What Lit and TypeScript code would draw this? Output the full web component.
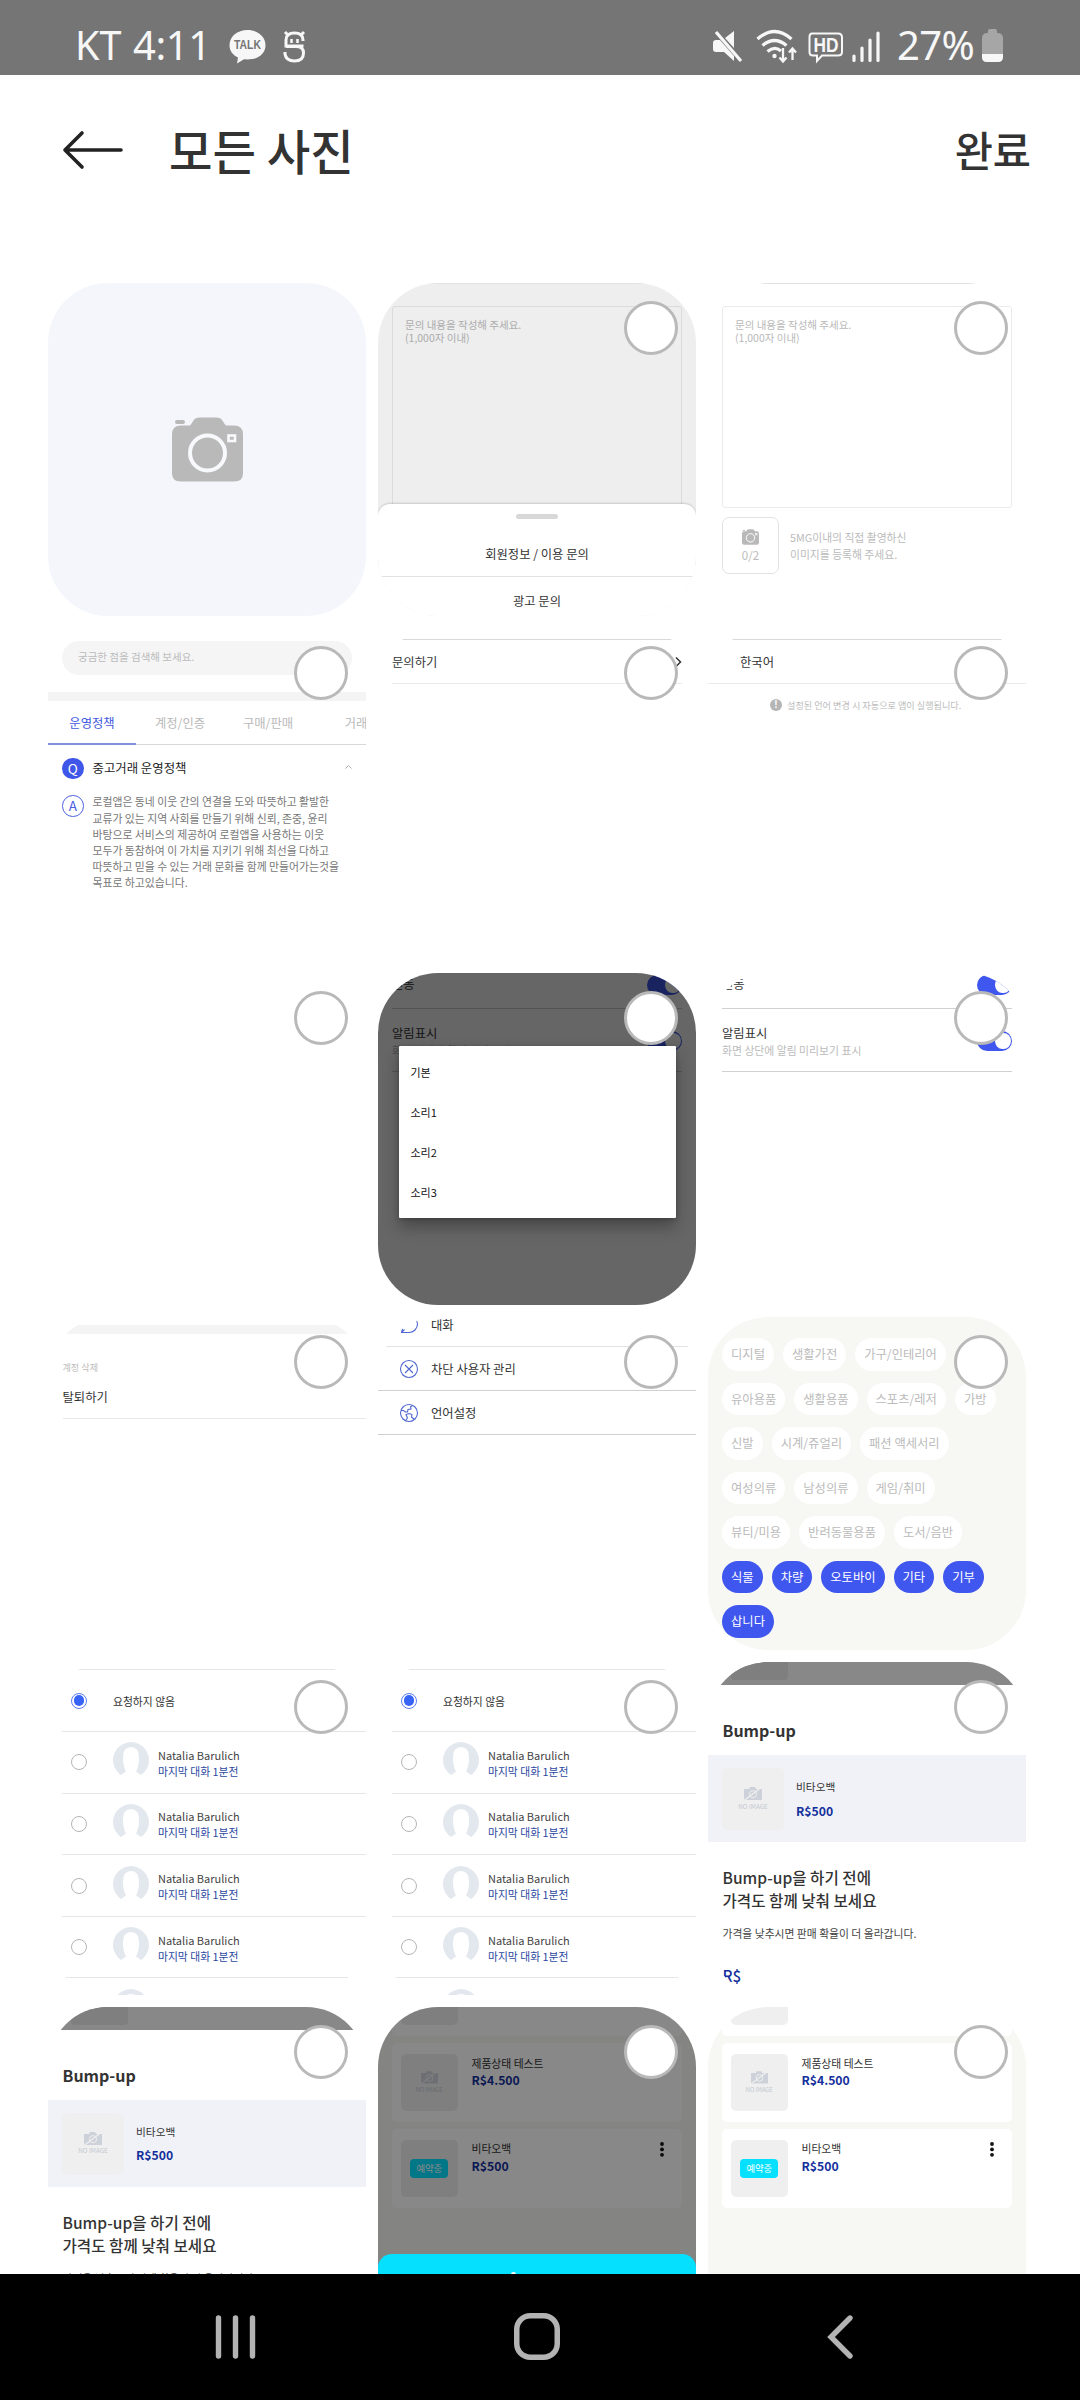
import { LitElement, html, css, svg, nothing } from "lit";
import { customElement, property } from "lit/decorators.js";

/** One picture of the gallery with its rounded mask and selection circle. */
@customElement("photo-tile")
class PhotoTile extends LitElement {
  @property({ type: Boolean }) selectable = false;

  static styles = css`
    :host { display: block; position: relative; height: 332.8px; overflow: hidden; border-radius: 60px; }
    .mark {
      position: absolute; top: 18px; right: 18px; box-sizing: border-box;
      width: 54px; height: 54px; border: 3px solid #b9b9b9; border-radius: 50%; background: #fff;
    }
  `;

  render() {
    return html`<slot></slot>${this.selectable ? html`<div class="mark"></div>` : nothing}`;
  }
}

const cameraBody = (hole: string) => svg`
  <path fill="#b9b9b9" d="M9 8H18C22 4 21 0 28 0H44C51 0 50 4 54 8H62Q71 8 71 17V56Q71 64 62 64H9Q0 64 0 56V17Q0 8 9 8Z"/>
  <rect x="3" y="2.500" width="10" height="4" rx="2" fill="#b9b9b9"/>
  <circle cx="35.500" cy="35.500" r="17.500" fill="none" stroke=${hole} stroke-width="4"/>
  <rect x="56.500" y="18" width="6.500" height="5.500" fill="none" stroke=${hole} stroke-width="2.600"/>`;

const noImage = html`
  <svg class="noimg-icon" viewBox="0 0 18 13.5">
    <path fill="#cdd1d9" d="M1 2H5L6 0H11L12 2H18V13H0V2Z"/>
    <circle cx="9" cy="7.200" r="3.600" fill="none" stroke="#efefef" stroke-width="1"/>
    <path d="M0 13.500L18 0" stroke="#efefef" stroke-width="1.300"/>
  </svg>
  <span class="noimg-text">NO IMAGE</span>`;

@customElement("app-root")
class AppRoot extends LitElement {
  static styles = css`
    :host { display: block; }
    * { box-sizing: border-box; }
    .page {
      width: 1080px; height: 2400px; display: flex; flex-direction: column; overflow: hidden; background: #fff;
      color: #333; font-family: "Noto Sans CJK KR", "Noto Sans", sans-serif; white-space: nowrap;
    }
    svg { display: block; flex: none; overflow: visible; }
    .grow { flex: 1; }

    .status {
      flex: none; height: 75px; background: #757575; color: #f7f7f7; display: flex; align-items: flex-end;
      padding: 0 77px 11px 75px; font: 400 40px/54px "Noto Sans", sans-serif;
    }
    .status span { height: 54px; padding-top: 8px; line-height: 54px; }
    .status .carrier { width: 58px; font-size: 39.5px; }
    .status .clock { width: 96px; letter-spacing: -0.4px; }
    .status .percent { width: 85px; letter-spacing: -0.6px; }
    .status .talk { font: 700 12.5px "Liberation Sans", sans-serif; }
    .status .hd { font: 700 20px "Liberation Sans", sans-serif; }

    .header { flex: none; height: 208px; padding: 0 49px 58px 62px; display: flex; align-items: center; color: #333; }
    .header h1 { margin: 0 0 0 45px; font-size: 47.3px; font-weight: 500; line-height: 60px; }
    .header .done { font-size: 41.5px; font-weight: 500; line-height: 56px; margin-top: -3px; }

    .gallery {
      flex: 1; min-height: 0; overflow: hidden; padding: 0 54px 0 48px; align-content: start;
      display: grid; grid-template-columns: repeat(3, 318px); gap: 12px;
    }
    .screen { display: flex; flex-direction: column; height: 100%; position: relative; background: #fff; font-size: 12.3px; line-height: 18px; }
    .screen > * { flex: none; }
    .dim { position: absolute; inset: 0; background: rgba(0, 0, 0, 0.6); }
    .dim.light { background: rgba(0, 0, 0, 0.067); }
    .dim.mid { background: rgba(0, 0, 0, 0.467); }

    .photo { background: #f4f6fb; align-items: center; justify-content: center; }

    .inquiry { border-top: 1.5px solid #e2e2e2; padding: 22px 14px 0; }
    .textarea { height: 202px; border: 1.3px solid #ebebeb; border-radius: 3px; padding: 11px 12px; font-size: 10.5px; line-height: 13px; color: #b9b9b9; }
    .attach { display: flex; align-items: center; gap: 11px; margin-top: 9px; font-size: 10.8px; line-height: 16.4px; color: #bbb; }
    .attach-box {
      width: 57px; height: 57px; border: 1.3px solid #e2e2e2; border-radius: 7px;
      display: flex; flex-direction: column; align-items: center; padding-top: 11px; font-size: 11.5px; line-height: 20px;
    }
    .sheet { position: absolute; left: 0; right: 0; top: 219.5px; bottom: 0; background: #fff; border-radius: 12px 12px 0 0; box-shadow: 0 -1px 2px rgba(0,0,0,.15); display: flex; flex-direction: column; align-items: center; padding: 10.5px 3px 0; }
    .sheet .handle { flex: none; width: 42px; height: 5px; border-radius: 3px; background: #d8d8d8; }
    .sheet .option { flex: none; align-self: stretch; text-align: center; height: 58px; padding-top: 25.5px; border-bottom: 1.3px solid #e2e2e2; }
    .sheet .option.last { border: 0; height: 34px; padding-top: 15px; }

    .faq { padding-top: 12.8px; }
    .search { margin: 0 14px; height: 34px; border-radius: 17px; background: #f5f5f5; padding-left: 16px; font-size: 10.5px; line-height: 32px; color: #bbb; }
    .band { height: 9px; margin-top: 17.5px; background: #f4f4f4; }
    .tabs { display: flex; height: 43.5px; border-bottom: 1.3px solid #d8d8d8; color: #b9b9b9; line-height: 44px; }
    .tabs span { flex: none; width: 88px; text-align: center; height: 43.5px; }
    .tabs .on { color: #4059e0; border-bottom: 2px solid #8290d8; }
    .qa { display: flex; gap: 9px; padding: 0 14px; margin-top: 13px; }
    .qa .badge { flex: none; width: 21.5px; height: 21.5px; border-radius: 50%; text-align: center; font-size: 13.5px; line-height: 19px; }
    .qa .badge.q { background: #3f57e8; color: #fff; line-height: 20px; }
    .qa .badge.a { border: 1.2px solid #4a5fe0; color: #4a5fe0; }
    .qa .title { color: #222; font-size: 12.4px; line-height: 20px; flex: 1; }
    .qa svg { margin-top: 7px; }
    .qa .body { font-size: 10.85px; line-height: 16.2px; color: #777; margin-top: -1.7px; }
    .qa.answer { margin-top: 16px; }

    .menu-line { height: 12.3px; border-bottom: 1.3px solid #d9d9d9; }
    .menu { display: flex; align-items: center; justify-content: space-between; height: 44.3px; margin: 0 14px; border-bottom: 1.6px solid #eaeaea; }
    .menu.lang { margin: 0; padding-left: 32px; }
    .note { display: flex; align-items: center; gap: 5px; padding-left: 62px; margin-top: 12px; font-size: 9.15px; color: #bbb; line-height: 18px; }
    .note i { width: 12px; height: 12px; border-radius: 50%; background: #b5b5b5; color: #fff; font: 700 10px/12px "Liberation Sans", sans-serif; text-align: center; }

    .settings { padding: 0 14px; }
    .setting { display: flex; align-items: flex-start; justify-content: space-between; height: 36.6px; padding: 2.7px 0 0; border-bottom: 1.3px solid #d0d0d0; }
    .setting.tall { height: 63.3px; padding-top: 15px; }
    .setting .sub { font-size: 10.85px; color: #bbb; margin-top: -1px; }
    .toggle { width: 35px; height: 19.5px; border-radius: 10px; background: #3f57ee; display: flex; justify-content: flex-end; padding: 1.3px; }
    .toggle::after { content: ""; width: 15.8px; height: 16.8px; border-radius: 50%; background: #fff; }
    .tall .toggle { margin-top: 7.2px; }
    .dialog { position: absolute; left: 20.5px; top: 73px; width: 277.5px; height: 172.7px; background: #fff; border-radius: 1px; box-shadow: 0 9px 16px rgba(0,0,0,.3), 0 1px 4px rgba(0,0,0,.2); padding: 6.5px 12px; font-size: 11px; line-height: 40px; color: #111; display: flex; flex-direction: column; }

    .account { padding: 8px 0 0; }
    .account .strip { height: 8.5px; background: #f4f4f4; }
    .account .label { margin: 24.5px 14.5px 0; font-size: 9.1px; color: #bbb; }
    .account .leave { margin-left: 14.5px; padding: 11.5px 0 13px; height: 42.5px; border-bottom: 1.2px solid #e9e9e9; }
    .links .link { display: flex; align-items: center; gap: 13px; padding-left: 22px; height: 44px; border-bottom: 1.3px solid #d0d0d0; }
    .links .link.first { height: 30px; padding-bottom: 13px; border-color: #e2e2e2; }

    .tags { background: #f7f8f4; padding: 20.7px 14px; gap: 12px; }
    .tag-row { display: flex; gap: 9px; }
    .tag { height: 32.5px; padding: 0 9px; border-radius: 17px; background: #fff; color: #bbb; line-height: 33px; }
    .tag.on { background: #3f57ee; color: #fff; }

    .person-line { height: 8.3px; border-bottom: 1.3px solid #e6e6e6; }
    .person { height: 61.6px; margin-left: 14px; padding-left: 9px; display: flex; align-items: center; border-bottom: 1.3px solid #e6e6e6; font-size: 10.8px; line-height: 16px; }
    .radio { width: 16px; height: 16px; border: 1.1px solid #b5b5b5; border-radius: 50%; margin-right: 26px; flex: none; }
    .radio.on { border-color: #5b7cf7; display: grid; place-items: center; }
    .radio.on::after { content: ""; width: 10.6px; height: 10.6px; border-radius: 50%; background: #3763f6; }
    .person .who { margin-left: 9px; color: #444; padding-top: 1px; }
    .person .who .name { font-size: 11px; }
    .person .when { color: #2b489f; }

    .bump .top { height: 22.7px; background: #888; padding-left: 23px; }
    .bump .top i { display: block; width: 56.5px; height: 18.3px; background: #7f7f7f; border-radius: 0 0 4px 4px; }
    .bump h2 { margin: 0; padding: 34px 14.5px 0; height: 70.6px; font-size: 16px; line-height: 22px; font-weight: 700; }
    .bump .item { height: 86.7px; background: #f1f2f7; display: flex; align-items: center; padding: 0 14px; gap: 12px; font-size: 10.7px; }
    .thumb { flex: none; display: flex; flex-direction: column; align-items: center; justify-content: center; background: #efefef; border-radius: 5px; }
    .bump .thumb { width: 62px; height: 62px; }
    .noimg-icon { width: 18px; height: 13.5px; }
    .noimg-text { font-size: 6.3px; line-height: 9px; margin-top: 1px; color: #c3c7cf; }
    .price { color: #14309c; font-weight: 700; font-size: 12.2px; }
    .bump .price { margin-top: 5.5px; }
    .bump .lead { padding: 24px 14.5px 0; font-size: 15.6px; line-height: 22.6px; font-weight: 500; color: #333; }
    .bump .hint { padding: 13px 14.5px 0; font-size: 10.8px; color: #444; }
    .bump .cur { padding: 24px 14.5px 0; font-size: 15.3px; font-weight: 500; color: #14309c; }

    .goods { background: #f7f8f4; padding: 0 14px; gap: 6.7px; }
    .card { height: 79px; border-radius: 5px; background: #fff; display: flex; padding: 11.5px 17px 0 9px; gap: 14px; font-size: 10.8px; position: relative; }
    .card.cut { height: 29.3px; padding-top: 0; }
    .card .thumb { width: 56.5px; height: 56.5px; }
    .card.cut .thumb { height: 18.3px; border-radius: 0 0 5px 5px; }
    .card .name { margin-top: -0.7px; }
    .card .price { margin-top: -0.7px; }
    .card .noimg-icon { width: 17px; height: 13px; }
    .card .noimg-text { font-size: 5.8px; }
    .card .sold { width: 37.6px; height: 19.3px; border-radius: 4px; background: #05e0ff; color: #fff; font-size: 9.3px; line-height: 19px; text-align: center; }
    .card svg.dots { margin-top: 1.5px; margin-right: 1px; }
    .tray { position: absolute; left: 0; right: 0; bottom: 0; top: 247px; background: #05e0ff; border-radius: 14px 14px 0 0; padding: 18.5px 0 0 133px; }
    .tray i { display: block; width: 5px; height: 6px; border-radius: 3px 3px 0 0; background: #fff; }

    .nav { flex: none; height: 126px; background: #000; display: flex; align-items: center; padding: 0 0 1px 215px; }
    .nav .home { margin: 0 267px 0 258px; }
  `;

  private chevron() {
    return html`<svg width="7" height="10" viewBox="0 0 7 10" fill="none" stroke="#333" stroke-width="1.500"><path d="M1 0.500L5.500 5L1 9.500"/></svg>`;
  }

  private statusBar() {
    return html`<div class="status">
      <span class="carrier">KT</span><span class="clock">4:11</span>
      <svg width="37" height="54" viewBox="0 0 37 54">
        <path fill="#f7f7f7" d="M18.500 20C28.700 20 36.500 26.500 36.500 35.200C36.500 44 28.700 49.500 18.500 49.500L15 49.300L8 53.500L9 47.600C4 45 0.500 41 0.500 35.200C0.500 26.500 8.300 20 18.500 20Z"/>
        <text class="talk" x="18.500" y="39.300" text-anchor="middle" fill="#757575" textLength="27" lengthAdjust="spacingAndGlyphs">TALK</text>
      </svg>
      <svg width="54" height="54" viewBox="0 0 54 54" fill="none" stroke="#f7f7f7" stroke-width="3">
        <path d="M37.500 36H20V30Q20 23 28.500 23Q37 23 37 30V31M19 42V44Q20 51 28.500 51Q37.500 51 37.500 43Q37.500 36.500 30 36.500H20M20 35V31" />
        <path d="M19 22L22 25M38 22L35 25"/><path d="M25.500 29V33M31.500 29V33" stroke-width="2.500"/>
      </svg>
      <span class="grow"></span>
      <svg width="185" height="54" viewBox="0 0 185 54" fill="none" stroke="#f7f7f7" stroke-width="2.600">
        <path fill="#f7f7f7" stroke="none" d="M1 33Q1 30 4 30H8L22 46V51L12 42H4Q1 42 1 39ZM13 28L22 21V38Z"/>
        <path d="M4 22L29 51" stroke-width="3.200"/>
        <path d="M45.500 29Q62.500 14 79.500 29M50.500 35.500Q62.500 25.500 74.500 35.500M55.500 41.500Q62.500 35.500 69 41" stroke-width="3.200"/>
        <circle cx="62.500" cy="46" r="2.200" fill="#f7f7f7" stroke="none"/>
        <path d="M71 38V51M67.500 47.500L71 51.500L74.500 47.500M80.500 50V39M77 42.500L80.500 38.500L84 42.500" stroke-width="2.300"/>
        <path d="M100 23.500H126Q130 23.500 130 27.500V42Q130 45.500 126 45.500H110L105 51V45.500H101Q97.500 45.500 97.500 42V27Q97.500 23.500 100 23.500Z" stroke-width="2"/>
        <text class="hd" x="114" y="41.700" text-anchor="middle" fill="#f7f7f7" stroke="none" textLength="25" lengthAdjust="spacingAndGlyphs">HD</text>
        <path d="M142 46V50.500M150 38V50.500M158 30V50.500M166 23V50.500" stroke-width="3.200" stroke-linecap="round"/>
      </svg>
      <span class="percent">27%</span>
      <svg width="21" height="54" viewBox="0 0 21 54">
        <path fill="#a6a6a6" d="M6 21Q6 19 8 19H13Q15 19 15 21V23H17Q21 24 21 28V47Q21 52 16 52H5Q0 52 0 47V28Q0 24 4 23H6Z"/>
        <path fill="#f7f7f7" d="M0 44H21V47Q21 52 16 52H5Q0 52 0 47Z"/>
      </svg>
    </div>`;
  }

  private question() {
    return html`<div class="textarea">문의 내용을 작성해 주세요.<br />(1,000자 이내)</div>`;
  }

  private settings() {
    return html`<div class="setting"><span>진동</span><div class="toggle"></div></div>
      <div class="setting tall">
        <div><div>알림표시</div><div class="sub">화면 상단에 알림 미리보기 표시</div></div>
        <div class="toggle"></div>
      </div>`;
  }

  private people() {
    return html`<div class="screen">
      <div class="person-line"></div>
      <div class="person"><div class="radio on"></div><span>요청하지 않음</span></div>
      ${[0, 1, 2, 3, 4].map(() => html`<div class="person">
        <div class="radio"></div>
        <svg width="36" height="36" viewBox="0 0 36 36">
          <path fill="#e3e8ef" d="M8 31A18 18 0 1 1 28 31L23 27.500Q26 22 26 14Q26 3 18 3Q10 3 10 14Q10 22 13 27.500Z"/>
        </svg>
        <div class="who"><div class="name">Natalia Barulich</div><div class="when">마지막 대화 1분전</div></div>
      </div>`)}
    </div>`;
  }

  private bump() {
    return html`<div class="screen bump">
      <div class="top"><i></i></div>
      <h2>Bump-up</h2>
      <div class="item"><div class="thumb">${noImage}</div><div><div>비타오백</div><div class="price">R$500</div></div></div>
      <div class="lead">Bump-up을 하기 전에<br />가격도 함께 낮춰 보세요</div>
      <div class="hint">가격을 낮추시면 판매 확율이 더 올라갑니다.</div>
      <div class="cur">R$</div>
    </div>`;
  }

  private goods() {
    return html`<div class="card cut"><div class="thumb"></div></div>
      <div class="card"><div class="thumb">${noImage}</div><div><div class="name">제품상태 테스트</div><div class="price">R$4.500</div></div></div>
      <div class="card">
        <div class="thumb"><div class="sold">예약중</div></div>
        <div class="grow"><div class="name">비타오백</div><div class="price">R$500</div></div>
        <svg class="dots" width="4" height="15" viewBox="0 0 4 15" fill="#111"><circle cx="2" cy="2" r="1.900"/><circle cx="2" cy="7.400" r="1.900"/><circle cx="2" cy="12.800" r="1.900"/></svg>
      </div>`;
  }

  private tagRows: string[][] = [
    ["디지털", "생활가전", "가구/인테리어"],
    ["유아용품", "생활용품", "스포츠/레저", "가방"],
    ["신발", "시계/쥬얼리", "패션 액세서리"],
    ["여성의류", "남성의류", "게임/취미"],
    ["뷰티/미용", "반려동물용품", "도서/음반"],
    ["식물", "차량", "오토바이", "기타", "기부"],
    ["삽니다"],
  ];

  render() {
    return html`<div class="page">
      ${this.statusBar()}
      <div class="header">
        <svg width="62" height="38" viewBox="0 0 62 38" fill="none" stroke="#222" stroke-width="3.600" stroke-linecap="round" stroke-linejoin="round"><path d="M59 19H3M20 2L3 19L20 36"/></svg>
        <h1>모든 사진</h1><span class="grow"></span><span class="done">완료</span>
      </div>

      <div class="gallery">
        <photo-tile><div class="screen photo"><svg width="71" height="65" viewBox="0 0 71 64">${cameraBody("#f8f9fc")}</svg></div></photo-tile>

        <photo-tile selectable><div class="screen inquiry">${this.question()}
          <div class="dim light"></div>
          <div class="sheet"><div class="handle"></div><div class="option">회원정보 / 이용 문의</div><div class="option last">광고 문의</div></div>
        </div></photo-tile>

        <photo-tile selectable><div class="screen inquiry">${this.question()}
          <div class="attach">
            <div class="attach-box"><svg width="17" height="16" viewBox="0 0 71 64">${cameraBody("#fff")}</svg>0/2</div>
            <div>5MG이내의 직접 촬영하신<br />이미지를 등록해 주세요.</div>
          </div>
        </div></photo-tile>

        <photo-tile selectable><div class="screen faq">
          <div class="search">궁금한 점을 검색해 보세요.</div>
          <div class="band"></div>
          <div class="tabs"><span class="on">운영정책</span><span>계정/인증</span><span>구매/판매</span><span>거래</span></div>
          <div class="qa"><div class="badge q">Q</div><div class="title">중고거래 운영정책</div>
            <svg width="7" height="4" viewBox="0 0 7 4" fill="none" stroke="#aaa" stroke-width="1"><path d="M0.500 3.500L3.500 0.500L6.500 3.500"/></svg></div>
          <div class="qa answer"><div class="badge a">A</div><div class="body">로컬앱은 동네 이웃 간의 연결을 도와 따뜻하고 활발한<br />교류가 있는 지역 사회를 만들기 위해 신뢰, 존중, 윤리<br />바탕으로 서비스의 제공하여 로컬앱을 사용하는 이웃<br />모두가 동참하여 이 가치를 지키기 위해 최선을 다하고<br />따뜻하고 믿을 수 있는 거래 문화를 함께 만들어가는것을<br />목표로 하고있습니다.</div></div>
        </div></photo-tile>

        <photo-tile selectable><div class="screen">
          <div class="menu-line"></div><div class="menu"><span>문의하기</span>${this.chevron()}</div>
        </div></photo-tile>

        <photo-tile selectable><div class="screen">
          <div class="menu-line"></div><div class="menu lang"><span>한국어</span></div>
          <div class="note"><i>!</i><span>설정된 언어 변경 시 자동으로 앱이 실행됩니다.</span></div>
        </div></photo-tile>

        <photo-tile selectable></photo-tile>

        <photo-tile selectable><div class="screen settings">${this.settings()}
          <div class="dim"></div>
          <div class="dialog"><span>기본</span><span>소리1</span><span>소리2</span><span>소리3</span></div>
        </div></photo-tile>

        <photo-tile selectable><div class="screen settings">${this.settings()}</div></photo-tile>

        <photo-tile selectable><div class="screen account">
          <div class="strip"></div><div class="label">계정 삭제</div><div class="leave">탈퇴하기</div>
        </div></photo-tile>

        <photo-tile selectable><div class="screen links">
          <div class="link first"><svg width="18" height="18" viewBox="0 0 18 18" fill="none" stroke="#5068d0" stroke-width="1.100"><path d="M9 -0.500A8.500 8.500 0 0 1 9 16.500H1.500L2.500 12.500M1.500 16.500L4.500 13.500"/></svg><span>대화</span></div>
          <div class="link"><svg width="18" height="18" viewBox="0 0 18 18" fill="none" stroke="#5068d0" stroke-width="1.100"><circle cx="9" cy="9" r="8.500"/><path d="M5 5L13 13M13 5L5 13"/></svg><span>차단 사용자 관리</span></div>
          <div class="link"><svg width="18" height="18" viewBox="0 0 18 18" fill="none" stroke="#5068d0" stroke-width="1.100"><circle cx="9" cy="9" r="8.500"/><path d="M12.500 1.500L10.500 3L11 5L8 5.500L7.500 8H5.500L3.500 6.500L1 6.500M5.500 16.500L7.500 14L6 10.500L9 9.500L12 10.500L11.500 13L14.500 15.500"/></svg><span>언어설정</span></div>
        </div></photo-tile>

        <photo-tile selectable><div class="screen tags">
          ${this.tagRows.map((row, i) => html`<div class="tag-row">${row.map((t) => html`<span class="tag ${i > 4 ? "on" : ""}">${t}</span>`)}</div>`)}
        </div></photo-tile>

        <photo-tile selectable>${this.people()}</photo-tile>
        <photo-tile selectable>${this.people()}</photo-tile>
        <photo-tile selectable>${this.bump()}</photo-tile>
        <photo-tile selectable>${this.bump()}</photo-tile>

        <photo-tile selectable><div class="screen goods">${this.goods()}
          <div class="dim mid"></div><div class="tray"><i></i></div>
        </div></photo-tile>

        <photo-tile selectable><div class="screen goods">${this.goods()}</div></photo-tile>
      </div>

      <div class="nav">
        <svg width="41" height="44" viewBox="0 0 41 44" stroke="#b3b3b3" stroke-width="5.400" stroke-linecap="round"><path d="M3.500 3V41M20.500 3V41M37.500 3V41"/></svg>
        <svg class="home" width="46" height="47" viewBox="0 0 46 47" fill="none" stroke="#b3b3b3" stroke-width="5.500"><rect x="2.750" y="2.750" width="40.500" height="41.500" rx="13.500"/></svg>
        <svg width="26" height="44" viewBox="0 0 26 44" fill="none" stroke="#b3b3b3" stroke-width="5.400" stroke-linecap="round"><path d="M23 3L4 22L23 41"/></svg>
      </div>
    </div>`;
  }
}
